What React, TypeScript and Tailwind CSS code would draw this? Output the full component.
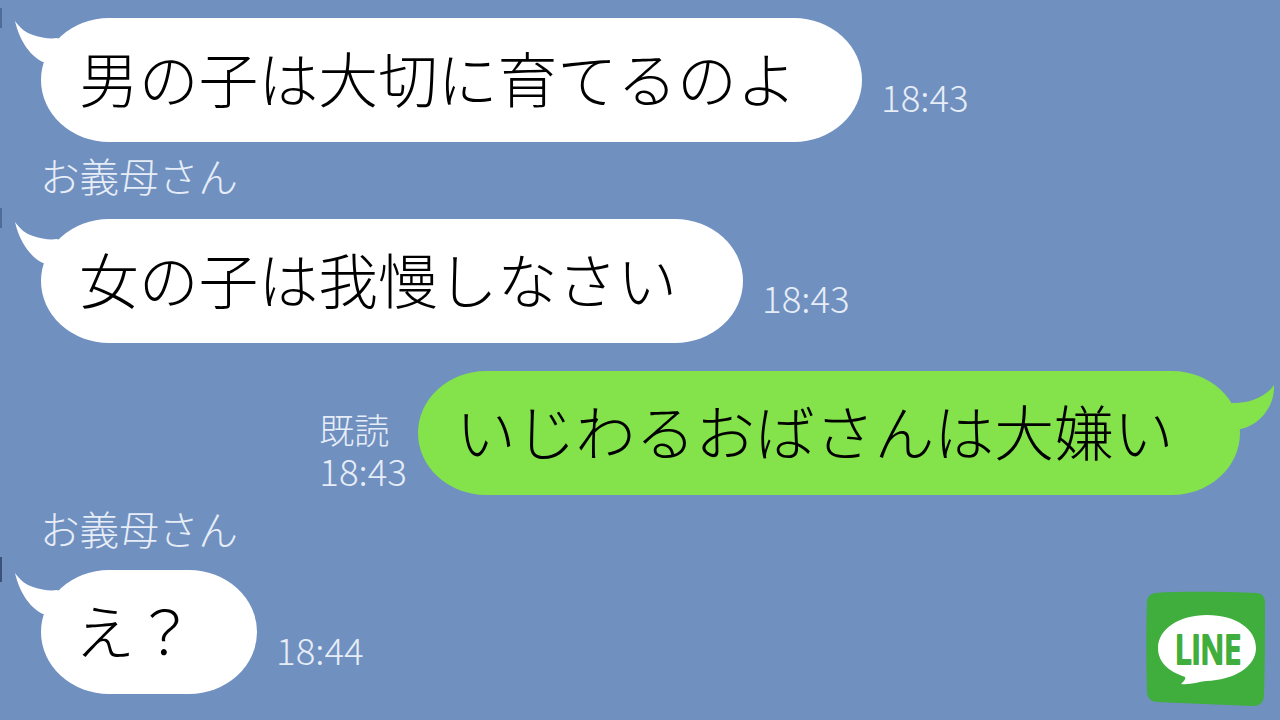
import React from 'react';

const FONT = "font-['Noto_Sans_CJK_JP','Noto_Sans',sans-serif]";

const LeftTail = () => (
  <svg className="absolute -left-[27px] top-0 w-[60px] h-[50px]" viewBox="0 0 60 50">
    <path d="M1 3 C6 10 12 15 19 17 C28 20 36 21 43 20 L55 25 L50 48 L29 44 C18 39 6 25 1 3 Z" fill="#ffffff" />
  </svg>
);

const RightTail = () => (
  <svg className="absolute -right-[35px] top-0 w-[60px] h-[60px]" viewBox="0 0 60 60">
    <path d="M59 14 C54 22 42 29 30 31 C24 32 20 32 17 32 L10 40 L15 58 L26 58 C44 54 60 36 59 14 Z" fill="#84e24a" />
  </svg>
);

const Bubble = ({ text, green, box }: { text: string; green?: boolean; box: string }) => (
  <div
    className={`relative h-[124px] rounded-[68px/62px] flex items-center pb-[4px] shrink-0 ${box} ${
      green ? 'bg-[#84e24a]' : 'bg-white'
    }`}
  >
    {green ? <RightTail /> : <LeftTail />}
    <span className="relative text-[59.8px] leading-none font-light text-black whitespace-nowrap">{text}</span>
  </div>
);

const Name = ({ className }: { className: string }) => (
  <div className={`pl-[40px] text-[39.6px] leading-[40px] font-light text-[#e6edf7] ${className}`}>お義母さん</div>
);

const Time = ({ children }: { children: string }) => (
  <span className="text-[36.7px] leading-[40px] font-light text-[#e6edf7]">{children}</span>
);

const LineLogo = () => (
  <svg className="absolute left-[1146px] top-[591px] w-[120px] h-[116px]" viewBox="0 0 120 116">
    <path
      d="M9 2 C40 0 85 1 110 2 C116 2 119 6 119 12 C119 45 119 75 118 104 C118 111 114 115 107 115 C75 114 40 112 12 111 C5 111 1 107 1 100 C0 70 0 35 1 11 C1 6 4 3 9 2 Z"
      fill="#3fae3c"
    />
    <path
      d="M61 24 C90 24 110 38 110 57 C110 76 88 89 60 90 C52 91 44 94 35 93 C38 90 40 88 39 86 C22 80 12 71 12 57 C12 38 33 24 61 24 Z"
      fill="#ffffff"
    />
    <text
      x="62"
      y="73"
      textAnchor="middle"
      fontFamily="'Open Sans', sans-serif"
      fontWeight="600"
      fontSize="39"
      textLength="66"
      lengthAdjust="spacingAndGlyphs"
      fill="#3fae3c"
      stroke="#3fae3c"
      strokeWidth="2.2"
      strokeLinejoin="round"
    >
      LINE
    </text>
  </svg>
);

export default function App() {
  return (
    <div className={`relative w-[1280px] h-[720px] overflow-hidden bg-[#7090c0] pt-[18px] ${FONT}`}>
      {/* faint dark slivers on the left edge of the picture */}
      <div className="absolute left-0 top-[8px] w-[2px] h-[20px] bg-[#4f6b98]" />
      <div className="absolute left-0 top-[208px] w-[2px] h-[20px] bg-[#4f6b98]" />
      <div className="absolute left-0 top-[557px] w-[2px] h-[25px] bg-[#3c5278]" />

      <div className="flex items-end pl-[41px]">
        <Bubble text="男の子は大切に育てるのよ" box="w-[821px] pl-[38px]" />
        <div className="ml-[19px] mb-[25px]"><Time>18:43</Time></div>
      </div>

      <Name className="mt-[13px]" />

      <div className="flex items-end pl-[41px] mt-[24px]">
        <Bubble text="女の子は我慢しなさい" box="w-[702px] pl-[38px]" />
        <div className="ml-[19px] mb-[25px]"><Time>18:43</Time></div>
      </div>

      <div className="flex items-end justify-end pr-[40px] mt-[28px]">
        <div className="flex flex-col mr-[11px] mb-[5px]">
          <span className="text-[35px] leading-[42px] font-light text-[#e6edf7]">既読</span>
          <Time>18:43</Time>
        </div>
        <Bubble text="いじわるおばさんは大嫌い" green box="w-[822px] pl-[38px]" />
      </div>

      <Name className="mt-[13px]" />

      <div className="flex items-end pl-[41px] mt-[22px]">
        <Bubble text="え？" box="w-[216px] pl-[34px]" />
        <div className="ml-[19px] mb-[24px]"><Time>18:44</Time></div>
      </div>

      <LineLogo />
    </div>
  );
}
